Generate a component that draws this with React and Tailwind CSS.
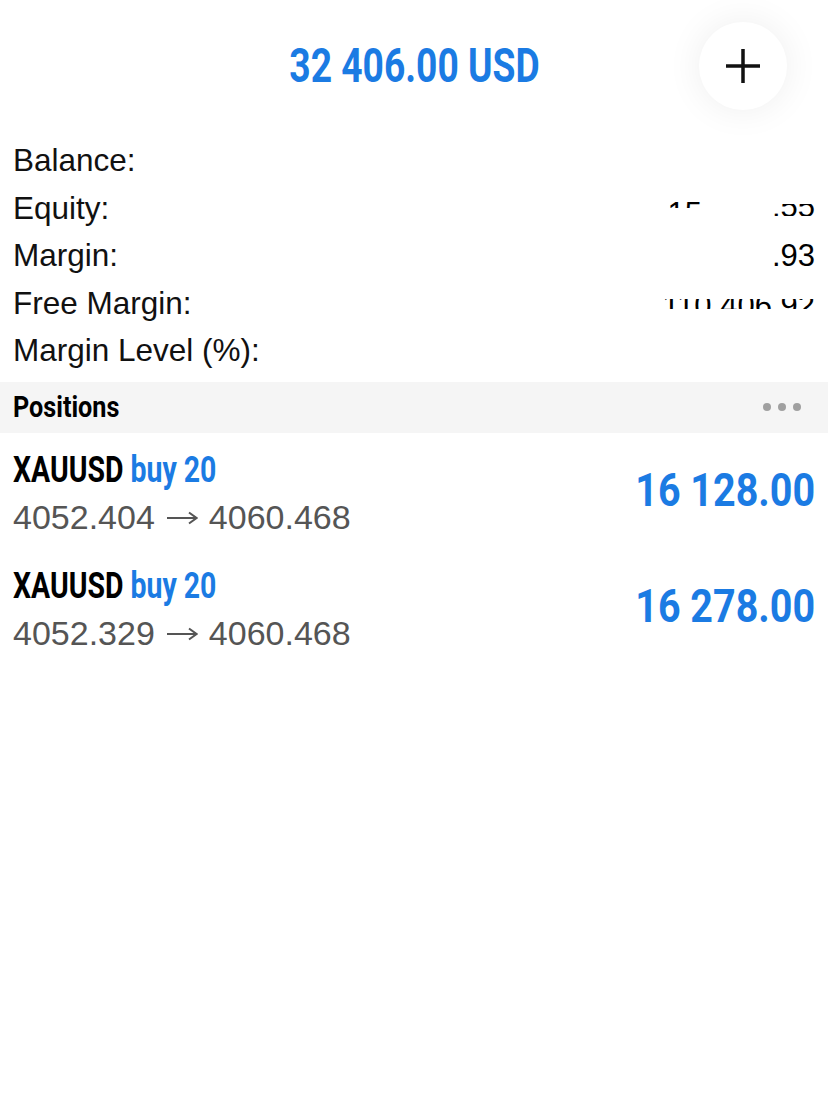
import React from 'react';

const condensed = { fontFamily: 'Roboto, "DejaVu Sans Condensed", sans-serif' };
const sans = { fontFamily: '"Liberation Sans", Arial, sans-serif' };

const stats = [
    { label: 'Balance:', value: null },
    { label: 'Equity:', value: 'equity' },
    { label: 'Margin:', value: 'margin' },
    { label: 'Free Margin:', value: 'free' },
    { label: 'Margin Level (%):', value: null },
];

const positions = [
    { symbol: 'XAUUSD', side: 'buy 20', open: '4052.404', current: '4060.468', profit: '16 128.00' },
    { symbol: 'XAUUSD', side: 'buy 20', open: '4052.329', current: '4060.468', profit: '16 278.00' },
];

const StatValue = ({ kind }) => {
    if (kind === 'margin') {
        return <span className="text-[31px] leading-none text-black pr-[13px]">.93</span>;
    }
    if (kind === 'equity') {
        return (
            <div className="flex items-start gap-[70px] pr-[13px]">
                <span className="h-[10px] overflow-hidden text-[31px] leading-none text-black mt-[-2px]">15</span>
                <span className="h-[12px] overflow-hidden text-[31px] leading-none text-black flex items-end mt-[4px]">
                    <span className="-mb-[6px]">.55</span>
                </span>
            </div>
        );
    }
    if (kind === 'free') {
        return (
            <div className="h-[10px] overflow-hidden pr-[13px] mt-[2px]">
                <span className="block text-[31px] leading-none text-black -mt-[9px]">110 406.92</span>
            </div>
        );
    }
    return null;
};

const Arrow = () => (
    <svg width="32" height="14" viewBox="0 0 32 14" className="mx-[11px] mt-[2px]">
        <path d="M1 7H30M23 1.5L30.5 7L23 12.5" stroke="#555" strokeWidth="2" fill="none" />
    </svg>
);

const App = () => {
    return (
        <div className="w-[828px] h-[1108px] bg-white overflow-hidden relative" style={sans}>
            {/* Header */}
            <div className="relative h-[137px]">
                <div className="pt-[42px] flex justify-center">
                    <span className="inline-block scale-x-[0.775] text-[48px] font-bold leading-none text-[#1b7be3]" style={condensed}>
                        32 406.00 USD
                    </span>
                </div>
                <button className="absolute left-[699px] top-[22px] w-[88px] h-[88px] rounded-full bg-white shadow-[0_0_36px_rgba(0,0,0,0.07)] flex items-center justify-center">
                    <svg width="38" height="38" viewBox="0 0 38 38">
                        <path d="M19 2V36M2 19H36" stroke="#111" strokeWidth="3.5" />
                    </svg>
                </button>
            </div>

            {/* Account stats */}
            <div className="flex flex-col">
                {stats.map((s) => (
                    <div key={s.label} className="h-[47.5px] flex items-center justify-between pl-[13px]">
                        <span className="text-[31.5px] text-[#111] leading-none">{s.label}</span>
                        <StatValue kind={s.value} />
                    </div>
                ))}
            </div>

            {/* Positions header */}
            <div className="mt-[7px] h-[51px] bg-[#f5f5f5] flex items-center justify-between pl-[13px] pr-[27px]">
                <span className="inline-block origin-left scale-x-[0.84] text-[30px] font-bold text-black leading-none" style={condensed}>Positions</span>
                <div className="flex gap-[7px]">
                    <span className="w-[8px] h-[8px] rounded-full bg-[#a0a0a0]" />
                    <span className="w-[8px] h-[8px] rounded-full bg-[#a0a0a0]" />
                    <span className="w-[8px] h-[8px] rounded-full bg-[#a0a0a0]" />
                </div>
            </div>

            {/* Positions list */}
            <div className="pt-[15px] flex flex-col">
                {positions.map((p, i) => (
                    <div key={i} className="h-[116px] flex justify-between pl-[13px] pr-[13px]">
                        <div className="flex flex-col">
                            <div className="h-[44px] flex items-center">
                                <span className="inline-block origin-left scale-x-[0.79] text-[36px] font-bold leading-none whitespace-nowrap" style={condensed}>
                                    <span className="text-black">{p.symbol}</span>{' '}
                                    <span className="text-[#1b7be3]">{p.side}</span>
                                </span>
                            </div>
                            <div className="h-[50px] flex items-center text-[34px] text-[#555] leading-none whitespace-nowrap">
                                {p.open}
                                <Arrow />
                                {p.current}
                            </div>
                        </div>
                        <div className="pt-[18px]">
                            <span className="inline-block origin-right scale-x-[0.84] text-[47px] font-bold text-[#1b7be3] leading-none whitespace-nowrap" style={condensed}>
                                {p.profit}
                            </span>
                        </div>
                    </div>
                ))}
            </div>
        </div>
    );
};

export default App;
